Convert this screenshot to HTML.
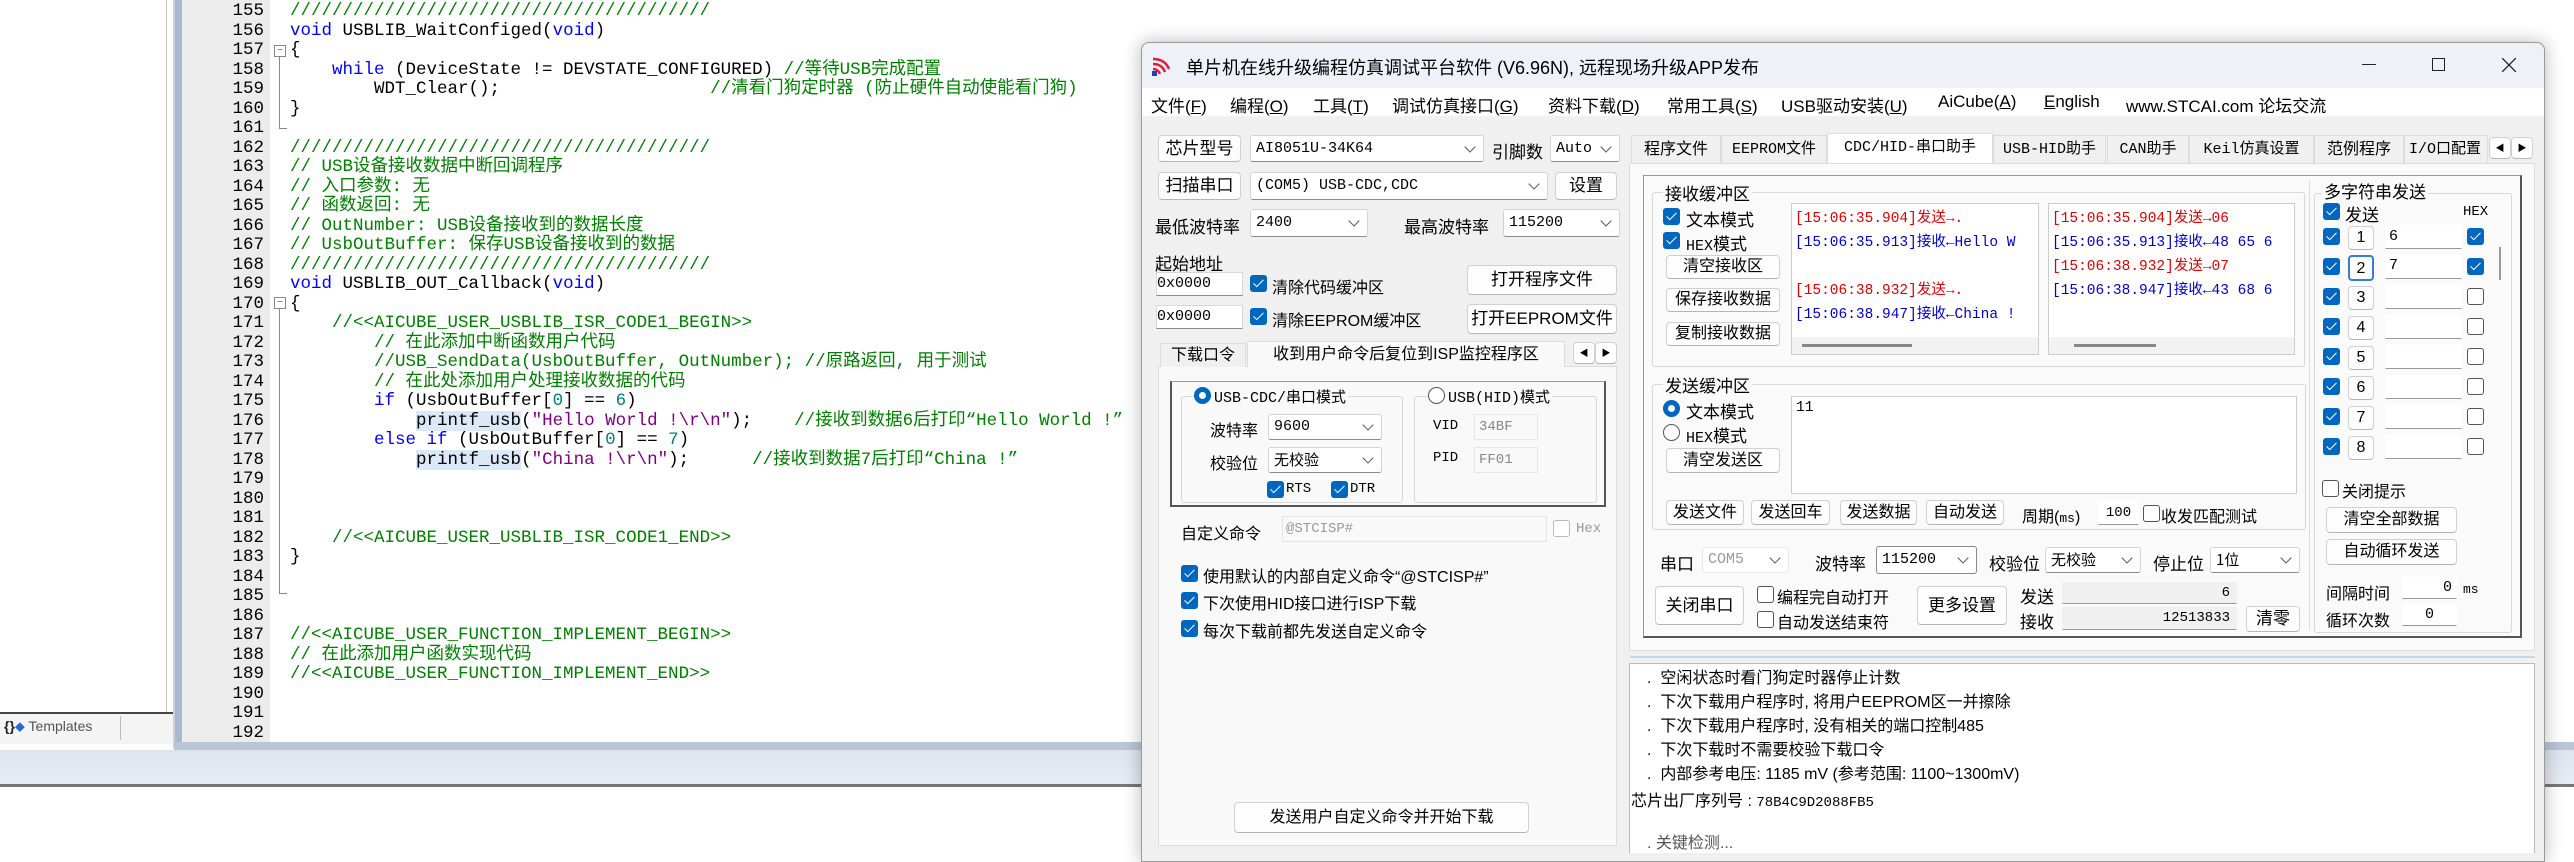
<!DOCTYPE html>
<html><head><meta charset="utf-8"><style>
*{margin:0;padding:0;box-sizing:border-box}
body{width:2574px;height:840px;overflow:hidden;background:#fff;position:relative;font-family:"Liberation Sans","Noto Sans CJK SC",sans-serif;font-size:16px;color:#000}
.a{position:absolute;white-space:nowrap}
.code{position:absolute;left:290px;font-family:"Liberation Mono","Noto Sans CJK SC",monospace;font-size:17.5px;line-height:19.5px;white-space:pre;color:#000}
.ln{position:absolute;left:182px;width:82px;text-align:right;font-family:"Liberation Mono",monospace;font-size:17.5px;line-height:19.5px;color:#000}
.k{color:#0000ff}.c{color:#008000}.s{color:#800080}.n{color:#008080}.hl{background:#dbe8f8}
.btn{position:absolute;background:#fdfdfd;border:1px solid #d0d0d0;border-bottom-color:#b5b5b5;border-radius:4px;text-align:center;white-space:nowrap;font-size:16px}
.cmb{position:absolute;background:#fff;border:1px solid #d3d3d3;border-bottom-color:#8a8a8a;border-radius:3px;white-space:nowrap;font-family:"Liberation Mono","Noto Sans CJK SC",monospace;font-size:15px;padding-left:5px}
.cmb::after{content:"";position:absolute;right:9px;top:50%;width:7px;height:7px;margin-top:-6px;border:solid #555;border-width:0 1.3px 1.3px 0;transform:rotate(45deg)}
.inp{position:absolute;background:#fff;border:1px solid #d8d8d8;border-bottom-color:#888;white-space:nowrap;font-family:"Liberation Mono",monospace;font-size:15px}
.cb{position:absolute;width:17px;height:17px;background:#0067c0;border-radius:3px}
.cb::after{content:"";position:absolute;left:5.5px;top:2px;width:4px;height:9px;border:solid #fff;border-width:0 1.6px 1.6px 0;transform:rotate(45deg)}
.cu{position:absolute;width:17px;height:17px;background:#fff;border:1px solid #555;border-radius:3px}
.rd{position:absolute;width:17px;height:17px;border-radius:50%;border:5px solid #0067c0;background:#fff}
.ru{position:absolute;width:17px;height:17px;border-radius:50%;border:1px solid #555;background:#fff}
.grp{position:absolute;border:1px solid #d8d8d8;border-radius:3px}
.lbl{position:absolute;white-space:nowrap;background:#f0f0f0;padding:0 2px}
.mono{font-family:"Liberation Mono","Noto Sans CJK SC",monospace}
.rx{position:absolute;font-family:"Liberation Mono","Noto Sans CJK SC",monospace;font-size:14.5px;white-space:nowrap}
.r{color:#e00000}.b{color:#0000d0}
.tab{position:absolute;top:135px;height:28px;background:#f0f0f0;border:1px solid #dcdcdc;border-bottom:none;font-size:16px;text-align:center;line-height:28px;white-space:nowrap;overflow:hidden}
</style></head><body>

<!-- EDITOR -->
<div class="a" style="left:0;top:0;width:167px;height:713px;background:#fff;border-right:1px solid #ccc"></div>
<div class="a" style="left:0;top:712px;width:175px;height:2px;background:#444"></div>
<div class="a" style="left:0;top:714px;width:175px;height:30px;background:#f4f4f4"></div>
<div class="a" style="left:4px;top:718px;font-size:14px;color:#555"><b style="color:#222">{}</b><span style="color:#2a6ad0;font-size:10px">◆</span> Templates</div>
<div class="a" style="left:120px;top:716px;width:1px;height:24px;background:#bbb"></div>
<div class="a" style="left:173px;top:0;width:9px;height:748px;background:#a9b8cc;border-left:2px solid #c8d3e0"></div>
<div class="a" style="left:182px;top:0;width:88px;height:742px;background:#ececec"></div>
<div class="a" style="left:174px;top:742px;width:2400px;height:8px;background:#b8c6d8"></div>
<div class="a" style="left:0;top:750px;width:2574px;height:34px;background:linear-gradient(#dce4ee,#e6ecf3)"></div>
<div class="a" style="left:0;top:784px;width:2574px;height:3px;background:#777"></div>

<div class="ln" style="top:2px">155<br>156<br>157<br>158<br>159<br>160<br>161<br>162<br>163<br>164<br>165<br>166<br>167<br>168<br>169<br>170<br>171<br>172<br>173<br>174<br>175<br>176<br>177<br>178<br>179<br>180<br>181<br>182<br>183<br>184<br>185<br>186<br>187<br>188<br>189<br>190<br>191<br>192</div>
<!-- fold markers -->
<div class="a" style="left:274px;top:45px;width:12px;height:12px;border:1px solid #888;background:#fff;font-size:10px;line-height:9px;text-align:center;color:#555">−</div>
<div class="a" style="left:279px;top:57px;width:1px;height:72px;background:#888"></div>
<div class="a" style="left:279px;top:128px;width:8px;height:1px;background:#888"></div>
<div class="a" style="left:274px;top:297px;width:12px;height:12px;border:1px solid #888;background:#fff;font-size:10px;line-height:9px;text-align:center;color:#555">−</div>
<div class="a" style="left:279px;top:309px;width:1px;height:284px;background:#888"></div>
<div class="a" style="left:279px;top:593px;width:8px;height:1px;background:#888"></div>

<div class="code" style="top:2px"><span class="c">////////////////////////////////////////</span>
<span class="k">void</span> USBLIB_WaitConfiged(<span class="k">void</span>)
{
    <span class="k">while</span> (DeviceState != DEVSTATE_CONFIGURED) <span class="c">//等待USB完成配置</span>
        WDT_Clear();                    <span class="c">//清看门狗定时器 (防止硬件自动使能看门狗)</span>
}

<span class="c">////////////////////////////////////////</span>
<span class="c">// USB设备接收数据中断回调程序</span>
<span class="c">// 入口参数: 无</span>
<span class="c">// 函数返回: 无</span>
<span class="c">// OutNumber: USB设备接收到的数据长度</span>
<span class="c">// UsbOutBuffer: 保存USB设备接收到的数据</span>
<span class="c">////////////////////////////////////////</span>
<span class="k">void</span> USBLIB_OUT_Callback(<span class="k">void</span>)
{
    <span class="c">//&lt;&lt;AICUBE_USER_USBLIB_ISR_CODE1_BEGIN&gt;&gt;</span>
        <span class="c">// 在此添加中断函数用户代码</span>
        <span class="c">//USB_SendData(UsbOutBuffer, OutNumber); //原路返回, 用于测试</span>
        <span class="c">// 在此处添加用户处理接收数据的代码</span>
        <span class="k">if</span> (UsbOutBuffer[<span class="n">0</span>] == <span class="n">6</span>)
            <span class="hl">printf_usb</span>(<span class="s">"Hello World !\r\n"</span>);    <span class="c">//接收到数据6后打印“Hello World !”</span>
        <span class="k">else if</span> (UsbOutBuffer[<span class="n">0</span>] == <span class="n">7</span>)
            <span class="hl">printf_usb</span>(<span class="s">"China !\r\n"</span>);      <span class="c">//接收到数据7后打印“China !”</span>



    <span class="c">//&lt;&lt;AICUBE_USER_USBLIB_ISR_CODE1_END&gt;&gt;</span>
}



<span class="c">//&lt;&lt;AICUBE_USER_FUNCTION_IMPLEMENT_BEGIN&gt;&gt;</span>
<span class="c">// 在此添加用户函数实现代码</span>
<span class="c">//&lt;&lt;AICUBE_USER_FUNCTION_IMPLEMENT_END&gt;&gt;</span></div>

<!-- APP WINDOW -->
<div class="a" style="left:1141px;top:42px;width:1404px;height:820px;background:#f0f0f0;border:1px solid #9a9a9a;border-radius:8px 8px 0 0;box-shadow:0 0 18px rgba(0,0,0,.28)"></div>
<div class="a" style="left:1142px;top:43px;width:1402px;height:45px;background:#eef2f8;border-radius:8px 8px 0 0"></div>
<!-- logo -->
<svg class="a" style="left:1151px;top:55px" width="22" height="22" viewBox="0 0 22 22"><path d="M2 4 Q14 4 18 14 M2 9 Q11 9 14 17 M2 14 Q7 14 9 19" stroke="#e0203a" stroke-width="2.6" fill="none"/><rect x="1" y="16" width="5" height="5" fill="#2040c0"/></svg>
<div class="a" style="left:1186px;top:54px;font-size:18px">单片机在线升级编程仿真调试平台软件 (V6.96N), 远程现场升级APP发布</div>
<div class="a" style="left:2362px;top:64px;width:14px;height:1.3px;background:#222"></div>
<div class="a" style="left:2432px;top:58px;width:13px;height:13px;border:1.3px solid #222"></div>
<svg class="a" style="left:2502px;top:58px" width="14" height="14"><path d="M0 0L14 14M14 0L0 14" stroke="#222" stroke-width="1.3"/></svg>
<div class="a" style="left:1142px;top:88px;width:1402px;height:28px;background:#fff"></div>
<div class="a" style="left:1151px;top:92px;font-size:17px;word-spacing:0">文件(<u>F</u>)</div>
<div class="a" style="left:1230px;top:92px;font-size:17px">编程(<u>O</u>)</div>
<div class="a" style="left:1313px;top:92px;font-size:17px">工具(<u>T</u>)</div>
<div class="a" style="left:1392px;top:92px;font-size:17px">调试仿真接口(<u>G</u>)</div>
<div class="a" style="left:1548px;top:92px;font-size:17px">资料下载(<u>D</u>)</div>
<div class="a" style="left:1667px;top:92px;font-size:17px">常用工具(<u>S</u>)</div>
<div class="a" style="left:1781px;top:92px;font-size:17px">USB驱动安装(<u>U</u>)</div>
<div class="a" style="left:1938px;top:92px;font-size:17px">AiCube(<u>A</u>)</div>
<div class="a" style="left:2044px;top:92px;font-size:17px"><u>E</u>nglish</div>
<div class="a" style="left:2126px;top:92px;font-size:17px">www.STCAI.com 论坛交流</div>

<!-- left pane -->
<div class="btn" style="left:1158px;top:135px;width:83px;height:27px;line-height:25px;font-size:17px">芯片型号</div>
<div class="cmb" style="left:1250px;top:135px;width:234px;height:27px;line-height:25px">AI8051U-34K64</div>
<div class="a" style="left:1492px;top:138px;font-size:17px">引脚数</div>
<div class="cmb" style="left:1550px;top:135px;width:70px;height:27px;line-height:25px">Auto</div>
<div class="btn" style="left:1158px;top:172px;width:83px;height:28px;line-height:26px;font-size:17px">扫描串口</div>
<div class="cmb" style="left:1250px;top:172px;width:298px;height:28px;line-height:26px">(COM5) USB-CDC,CDC</div>
<div class="btn" style="left:1555px;top:172px;width:62px;height:28px;line-height:26px;font-size:17px">设置</div>
<div class="a" style="left:1155px;top:213px;font-size:17px">最低波特率</div>
<div class="cmb" style="left:1250px;top:209px;width:118px;height:28px;line-height:26px">2400</div>
<div class="a" style="left:1404px;top:213px;font-size:17px">最高波特率</div>
<div class="cmb" style="left:1503px;top:209px;width:117px;height:28px;line-height:26px">115200</div>
<div class="a" style="left:1155px;top:250px;font-size:17px">起始地址</div>
<div class="inp" style="left:1156px;top:272px;width:87px;height:24px;line-height:22px">0x0000</div>
<div class="cb" style="left:1250px;top:275px"></div>
<div class="a" style="left:1272px;top:274px;font-size:16px">清除代码缓冲区</div>
<div class="btn" style="left:1467px;top:265px;width:150px;height:30px;line-height:28px;font-size:17px">打开程序文件</div>
<div class="inp" style="left:1156px;top:305px;width:87px;height:24px;line-height:22px">0x0000</div>
<div class="cb" style="left:1250px;top:308px"></div>
<div class="a" style="left:1272px;top:307px;font-size:16px">清除EEPROM缓冲区</div>
<div class="btn" style="left:1467px;top:304px;width:150px;height:30px;line-height:28px;font-size:17px">打开EEPROM文件</div>
<!-- tabs left -->
<div class="a" style="left:1158px;top:366px;width:459px;height:480px;background:#f9f9f9;border:1px solid #dcdcdc"></div>
<div class="tab" style="left:1160px;top:343px;width:86px;height:24px;line-height:24px">下载口令</div>
<div class="tab" style="left:1247px;top:341px;width:318px;height:26px;line-height:26px;background:#f9f9f9">收到用户命令后复位到ISP监控程序区</div>
<div class="btn" style="left:1573px;top:342px;width:22px;height:22px;font-size:9px;line-height:20px">◀</div>
<div class="btn" style="left:1595px;top:342px;width:22px;height:22px;font-size:9px;line-height:20px">▶</div>
<div class="a" style="left:1170px;top:381px;width:436px;height:126px;border:2px solid #555;border-top:1px solid #999"></div>
<div class="grp" style="left:1181px;top:396px;width:222px;height:107px"></div>
<div class="grp" style="left:1414px;top:396px;width:183px;height:107px"></div>
<div class="rd" style="left:1194px;top:387px"></div>
<div class="lbl mono" style="left:1212px;top:386px;font-size:15px;background:#f9f9f9">USB-CDC/串口模式</div>
<div class="ru" style="left:1428px;top:387px"></div>
<div class="lbl mono" style="left:1446px;top:386px;font-size:15px;background:#f9f9f9">USB(HID)模式</div>
<div class="a" style="left:1210px;top:417px;font-size:16px">波特率</div>
<div class="cmb" style="left:1268px;top:414px;width:114px;height:26px;line-height:24px">9600</div>
<div class="a" style="left:1210px;top:450px;font-size:16px">校验位</div>
<div class="cmb" style="left:1268px;top:447px;width:114px;height:26px;line-height:24px;font-family:'Noto Sans CJK SC'">无校验</div>
<div class="cb" style="left:1267px;top:481px"></div><div class="a mono" style="left:1286px;top:481px;font-size:14px">RTS</div>
<div class="cb" style="left:1331px;top:481px"></div><div class="a mono" style="left:1350px;top:481px;font-size:14px">DTR</div>
<div class="a mono" style="left:1433px;top:418px;font-size:14px">VID</div>
<div class="a mono" style="left:1474px;top:414px;width:64px;height:26px;line-height:24px;font-size:14px;color:#888;border:1px solid #e6e6e6;padding-left:4px">34BF</div>
<div class="a mono" style="left:1433px;top:450px;font-size:14px">PID</div>
<div class="a mono" style="left:1474px;top:447px;width:64px;height:26px;line-height:24px;font-size:14px;color:#888;border:1px solid #e6e6e6;padding-left:4px">FF01</div>
<div class="a" style="left:1181px;top:520px;font-size:16px">自定义命令</div>
<div class="a mono" style="left:1282px;top:516px;width:265px;height:26px;line-height:24px;font-size:14px;color:#999;border:1px solid #e4e4e4;padding-left:3px">@STCISP#</div>
<div class="cu" style="left:1553px;top:520px;border-color:#bbb"></div><div class="a mono" style="left:1576px;top:521px;font-size:14px;color:#999">Hex</div>
<div class="cb" style="left:1181px;top:565px"></div><div class="a" style="left:1203px;top:563px;font-size:16px">使用默认的内部自定义命令“@STCISP#”</div>
<div class="cb" style="left:1181px;top:592px"></div><div class="a" style="left:1203px;top:590px;font-size:16px">下次使用HID接口进行ISP下载</div>
<div class="cb" style="left:1181px;top:620px"></div><div class="a" style="left:1203px;top:618px;font-size:16px">每次下载前都先发送自定义命令</div>
<div class="btn" style="left:1234px;top:802px;width:295px;height:31px;line-height:29px;font-size:16px">发送用户自定义命令并开始下载</div>

<!-- right tabs -->
<div class="tab" style="left:1631px;width:90px">程序文件</div>
<div class="tab mono" style="left:1721px;width:106px;font-size:15px">EEPROM文件</div>
<div class="tab mono" style="left:1827px;top:133px;height:31px;width:166px;background:#fff;font-size:15px">CDC/HID-串口助手</div>
<div class="tab mono" style="left:1993px;width:113px;font-size:15px">USB-HID助手</div>
<div class="tab mono" style="left:2107px;width:82px;font-size:15px">CAN助手</div>
<div class="tab mono" style="left:2189px;width:125px;font-size:15px">Keil仿真设置</div>
<div class="tab" style="left:2314px;width:90px">范例程序</div>
<div class="tab mono" style="left:2404px;width:84px;font-size:15px;text-align:left;padding-left:4px">I/O口配置</div>
<div class="btn" style="left:2489px;top:137px;width:22px;height:22px;font-size:9px;line-height:20px">◀</div>
<div class="btn" style="left:2511px;top:137px;width:22px;height:22px;font-size:9px;line-height:20px">▶</div>
<div class="a" style="left:1629px;top:163px;width:906px;height:488px;background:#fafafa;border:1px solid #dcdcdc"></div>
<div class="a" style="left:1643px;top:175px;width:879px;height:463px;border:2px solid #555;border-top:1px solid #999;border-left:1px solid #999"></div>

<!-- receive group -->
<div class="grp" style="left:1652px;top:192px;width:653px;height:175px"></div>
<div class="lbl" style="left:1663px;top:180px;font-size:17px;background:#fafafa">接收缓冲区</div>
<div class="cb" style="left:1663px;top:208px"></div><div class="a" style="left:1686px;top:206px;font-size:17px">文本模式</div>
<div class="cb" style="left:1663px;top:232px"></div><div class="a" style="left:1686px;top:230px;font-size:17px"><span class="mono" style="font-size:15px">HEX</span>模式</div>
<div class="btn" style="left:1666px;top:255px;width:114px;height:24px;line-height:22px">清空接收区</div>
<div class="btn" style="left:1666px;top:288px;width:114px;height:24px;line-height:22px">保存接收数据</div>
<div class="btn" style="left:1666px;top:322px;width:114px;height:24px;line-height:22px">复制接收数据</div>
<div class="a" style="left:1791px;top:203px;width:248px;height:152px;background:#fff;border:1px solid #ccc;overflow:hidden">
 <div class="rx r" style="left:3px;top:2px">[15:06:35.904]发送→.</div>
 <div class="rx b" style="left:3px;top:26px">[15:06:35.913]接收←Hello W</div>
 <div class="rx r" style="left:3px;top:74px">[15:06:38.932]发送→.</div>
 <div class="rx b" style="left:3px;top:98px">[15:06:38.947]接收←China !</div>
 <div class="a" style="left:0;top:133px;width:248px;height:18px;background:#f2f2f2"></div>
 <div class="a" style="left:10px;top:140px;width:110px;height:3px;background:#888"></div>
</div>
<div class="a" style="left:2048px;top:203px;width:247px;height:152px;background:#fff;border:1px solid #ccc;overflow:hidden">
 <div class="rx r" style="left:3px;top:2px">[15:06:35.904]发送→06</div>
 <div class="rx b" style="left:3px;top:26px">[15:06:35.913]接收←48 65 6</div>
 <div class="rx r" style="left:3px;top:50px">[15:06:38.932]发送→07</div>
 <div class="rx b" style="left:3px;top:74px">[15:06:38.947]接收←43 68 6</div>
 <div class="a" style="left:0;top:133px;width:247px;height:18px;background:#f2f2f2"></div>
 <div class="a" style="left:25px;top:140px;width:82px;height:3px;background:#888"></div>
</div>

<!-- multi string -->
<div class="a" style="left:2309px;top:180px;width:1px;height:450px;background:#cfe0f0"></div>
<div class="grp" style="left:2314px;top:193px;width:198px;height:440px"></div>
<div class="lbl" style="left:2322px;top:178px;font-size:17px;background:#fafafa">多字符串发送</div>
<div class="cb" style="left:2323px;top:203px"></div><div class="a" style="left:2345px;top:201px;font-size:17px">发送</div>
<div class="a mono" style="left:2463px;top:204px;font-size:14px">HEX</div>
<div class="a" style="left:2499px;top:247px;width:2px;height:33px;background:#999"></div>

<div class="cb" style="left:2323px;top:228px"></div><div class="btn" style="left:2348px;top:226px;width:26px;height:24px;line-height:22px">1</div><div class="inp" style="left:2385px;top:225px;width:77px;height:24px;line-height:22px;border-color:#fff #fff #999 #fff;padding-left:3px">6</div><div class="cb" style="left:2467px;top:228px"></div>
<div class="cb" style="left:2323px;top:258px"></div><div class="btn" style="left:2348px;top:255px;width:26px;height:26px;line-height:24px;border:2px solid #3a7bd5">2</div><div class="inp" style="left:2385px;top:254px;width:77px;height:25px;line-height:22px;border-color:#fff #fff #999 #fff;padding-left:3px">7</div><div class="cb" style="left:2467px;top:258px"></div>
<div class="cb" style="left:2323px;top:288px"></div><div class="btn" style="left:2348px;top:286px;width:26px;height:24px;line-height:22px">3</div><div class="inp" style="left:2385px;top:285px;width:77px;height:24px;border-color:#fff #fff #999 #fff"></div><div class="cu" style="left:2467px;top:288px"></div>
<div class="cb" style="left:2323px;top:318px"></div><div class="btn" style="left:2348px;top:316px;width:26px;height:24px;line-height:22px">4</div><div class="inp" style="left:2385px;top:315px;width:77px;height:24px;border-color:#fff #fff #999 #fff"></div><div class="cu" style="left:2467px;top:318px"></div>
<div class="cb" style="left:2323px;top:348px"></div><div class="btn" style="left:2348px;top:346px;width:26px;height:24px;line-height:22px">5</div><div class="inp" style="left:2385px;top:345px;width:77px;height:24px;border-color:#fff #fff #999 #fff"></div><div class="cu" style="left:2467px;top:348px"></div>
<div class="cb" style="left:2323px;top:378px"></div><div class="btn" style="left:2348px;top:376px;width:26px;height:24px;line-height:22px">6</div><div class="inp" style="left:2385px;top:375px;width:77px;height:24px;border-color:#fff #fff #999 #fff"></div><div class="cu" style="left:2467px;top:378px"></div>
<div class="cb" style="left:2323px;top:408px"></div><div class="btn" style="left:2348px;top:406px;width:26px;height:24px;line-height:22px">7</div><div class="inp" style="left:2385px;top:405px;width:77px;height:24px;border-color:#fff #fff #999 #fff"></div><div class="cu" style="left:2467px;top:408px"></div>
<div class="cb" style="left:2323px;top:438px"></div><div class="btn" style="left:2348px;top:436px;width:26px;height:24px;line-height:22px">8</div><div class="inp" style="left:2385px;top:435px;width:77px;height:24px;border-color:#fff #fff #999 #fff"></div><div class="cu" style="left:2467px;top:438px"></div>
<div class="cu" style="left:2322px;top:480px"></div><div class="a" style="left:2342px;top:478px;font-size:16px">关闭提示</div>
<div class="btn" style="left:2326px;top:507px;width:131px;height:26px;line-height:24px">清空全部数据</div>
<div class="btn" style="left:2326px;top:539px;width:131px;height:26px;line-height:24px">自动循环发送</div>
<div class="a" style="left:2326px;top:580px;font-size:16px">间隔时间</div>
<div class="inp" style="left:2402px;top:577px;width:55px;height:22px;line-height:20px;text-align:right;padding-right:4px;border-color:#fff #fff #999 #fff">0</div>
<div class="a mono" style="left:2463px;top:582px;font-size:13px">ms</div>
<div class="a" style="left:2326px;top:607px;font-size:16px">循环次数</div>
<div class="inp" style="left:2402px;top:604px;width:55px;height:22px;line-height:20px;text-align:center;border-color:#fff #fff #999 #fff">0</div>

<!-- send group -->
<div class="grp" style="left:1652px;top:384px;width:654px;height:146px"></div>
<div class="lbl" style="left:1663px;top:372px;font-size:17px;background:#fafafa">发送缓冲区</div>
<div class="rd" style="left:1663px;top:400px"></div><div class="a" style="left:1686px;top:398px;font-size:17px">文本模式</div>
<div class="ru" style="left:1663px;top:424px"></div><div class="a" style="left:1686px;top:422px;font-size:17px"><span class="mono" style="font-size:15px">HEX</span>模式</div>
<div class="btn" style="left:1666px;top:448px;width:114px;height:25px;line-height:23px">清空发送区</div>
<div class="a mono" style="left:1791px;top:396px;width:506px;height:98px;background:#fff;border:1px solid #ccc;font-size:14.5px;padding:3px 4px">11</div>
<div class="btn" style="left:1666px;top:500px;width:78px;height:25px;line-height:23px">发送文件</div>
<div class="btn" style="left:1751px;top:500px;width:79px;height:25px;line-height:23px">发送回车</div>
<div class="btn" style="left:1840px;top:500px;width:77px;height:25px;line-height:23px">发送数据</div>
<div class="btn" style="left:1926px;top:500px;width:78px;height:25px;line-height:23px">自动发送</div>
<div class="a" style="left:2022px;top:503px;font-size:16px">周期(<span class="mono" style="font-size:13px">ms</span>)</div>
<div class="inp" style="left:2098px;top:501px;width:41px;height:24px;line-height:22px;text-align:center;font-size:14px;border-color:#fff #fff #999 #fff">100</div>
<div class="cu" style="left:2143px;top:505px"></div><div class="a" style="left:2161px;top:503px;font-size:16px">收发匹配测试</div>

<!-- serial row -->
<div class="a" style="left:1660px;top:550px;font-size:17px">串口</div>
<div class="cmb" style="left:1702px;top:547px;width:87px;height:26px;line-height:24px;color:#999;border-color:#e8e8e8">COM5</div>
<div class="a" style="left:1815px;top:550px;font-size:17px">波特率</div>
<div class="cmb" style="left:1876px;top:546px;width:101px;height:28px;line-height:26px;border:1px solid #888">115200</div>
<div class="a" style="left:1989px;top:550px;font-size:17px">校验位</div>
<div class="cmb" style="left:2045px;top:547px;width:96px;height:26px;line-height:24px;font-family:'Noto Sans CJK SC'">无校验</div>
<div class="a" style="left:2153px;top:550px;font-size:17px">停止位</div>
<div class="cmb" style="left:2210px;top:547px;width:90px;height:26px;line-height:24px;font-family:'Noto Sans CJK SC'">1位</div>
<div class="btn" style="left:1655px;top:586px;width:89px;height:39px;line-height:37px;font-size:17px">关闭串口</div>
<div class="cu" style="left:1757px;top:586px"></div><div class="a" style="left:1777px;top:584px;font-size:16px">编程完自动打开</div>
<div class="cu" style="left:1757px;top:611px"></div><div class="a" style="left:1777px;top:609px;font-size:16px">自动发送结束符</div>
<div class="btn" style="left:1917px;top:586px;width:90px;height:39px;line-height:37px;font-size:17px">更多设置</div>
<div class="a" style="left:2020px;top:583px;font-size:17px">发送</div>
<div class="inp" style="left:2062px;top:582px;width:175px;height:22px;line-height:20px;text-align:right;padding-right:6px;background:#f0f0f0;border-color:#f0f0f0 #f0f0f0 #999 #f0f0f0;font-size:14px">6</div>
<div class="a" style="left:2020px;top:608px;font-size:17px">接收</div>
<div class="inp" style="left:2062px;top:607px;width:175px;height:23px;line-height:21px;text-align:right;padding-right:6px;background:#f0f0f0;border-color:#f0f0f0 #f0f0f0 #999 #f0f0f0;font-size:14px">12513833</div>
<div class="btn" style="left:2246px;top:606px;width:54px;height:26px;line-height:24px;font-size:17px">清零</div>

<!-- log -->
<div class="a" style="left:1630px;top:656px;width:905px;height:2px;background:#c6d8ec"></div>
<div class="a" style="left:1629px;top:663px;width:906px;height:190px;background:#fff;border:1px solid #bbb;border-bottom:none"></div>
<div class="a" style="left:1647px;top:667px;font-size:16px;line-height:24px;white-space:pre">.  空闲状态时看门狗定时器停止计数
.  下次下载用户程序时, 将用户EEPROM区一并擦除
.  下次下载用户程序时, 没有相关的端口控制485
.  下次下载时不需要校验下载口令
.  内部参考电压: 1185 mV (参考范围: 1100~1300mV)</div>
<div class="a" style="left:1631px;top:787px;font-size:16px">芯片出厂序列号 : <span class="mono" style="font-size:14px">78B4C9D2088FB5</span></div>
<div class="a" style="left:1647px;top:829px;font-size:16px;color:#555">.  关键检测...</div>

</body></html>
